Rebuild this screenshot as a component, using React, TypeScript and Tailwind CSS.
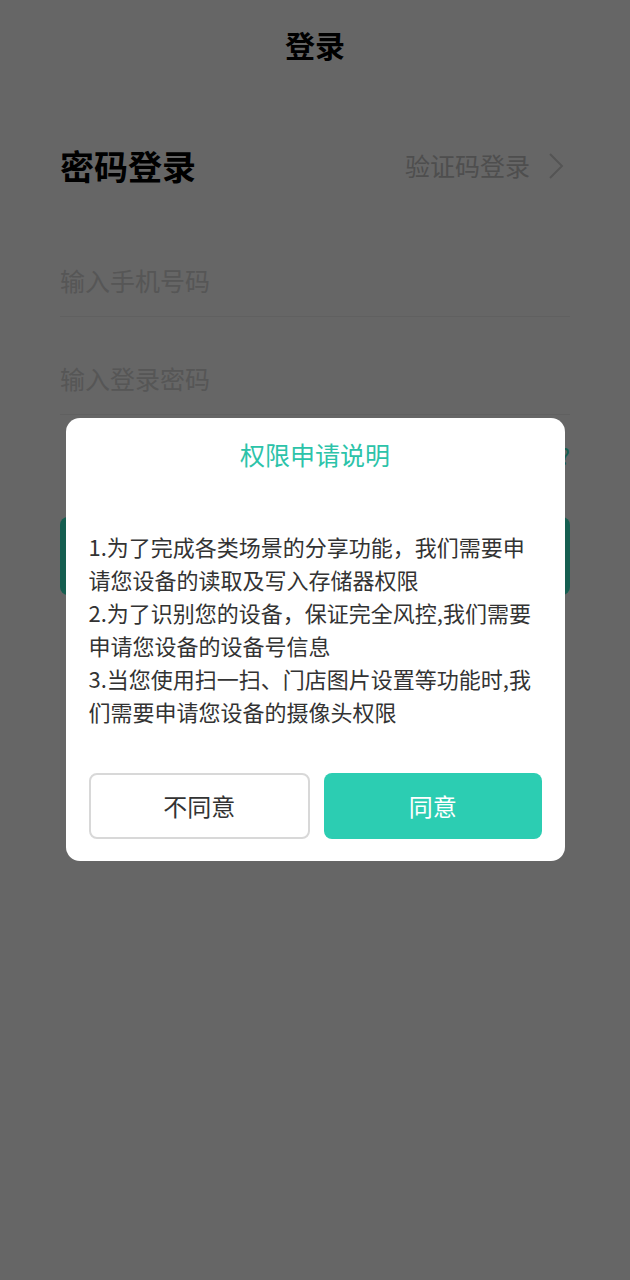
import React from 'react'

const lines = [
  '1.为了完成各类场景的分享功能，我们需要申',
  '请您设备的读取及写入存储器权限',
  '2.为了识别您的设备，保证完全风控,我们需要',
  '申请您设备的设备号信息',
  '3.当您使用扫一扫、门店图片设置等功能时,我',
  '们需要申请您设备的摄像头权限',
]

function Field({ placeholder }: { placeholder: string }) {
  return (
    <div className="flex h-[98px] items-end border-b border-[#f0f0f0] pb-[23px]">
      <span className="text-[25px] leading-[25px] text-[#d6d6d6]">{placeholder}</span>
    </div>
  )
}

function PermissionDialog() {
  return (
    <div className="fixed inset-0 bg-black/60 pt-[418px]">
      <div className="mx-auto w-[499px] rounded-[14px] bg-white pt-[20px] pb-[22px]">
        <h2 className="text-center text-[25px] leading-[32px] text-[#2cc3a9]">权限申请说明</h2>

        <div className="mt-[60px] px-[23px] text-[22px] text-[#333]">
          {lines.map((line) => (
            <div key={line} className="h-[33px] whitespace-nowrap leading-[33px]">
              {line}
            </div>
          ))}
        </div>

        <div className="mt-[45px] flex gap-[14px] px-[23px]">
          <button className="h-[66px] flex-1 rounded-[8px] border-2 border-[#d8d8d8] bg-white text-[24px] text-[#333]">
            不同意
          </button>
          <button className="h-[66px] flex-1 rounded-[8px] bg-[#2ccdb2] text-[24px] text-white">
            同意
          </button>
        </div>
      </div>
    </div>
  )
}

export default function App() {
  return (
    <main
      className="relative min-h-[1280px] bg-white text-black"
      style={{ fontFamily: '"Noto Sans CJK SC", "Noto Sans", sans-serif' }}
    >
      <header className="flex h-[88px] items-center justify-center">
        <h1 className="text-[30px] font-bold">登录</h1>
      </header>

      <section className="px-[60px]">
        <div className="mt-[53px] flex h-[50px] items-center justify-between">
          <div className="text-[34px] font-bold leading-[50px]">密码登录</div>
          <div className="flex items-center text-[25px] text-[#c3c3c3]">
            <span>验证码登录</span>
            <svg
              className="mr-[6px] ml-[18px]"
              width="16"
              height="28"
              viewBox="0 0 16 28"
              fill="none"
              stroke="#d2d2d2"
              strokeWidth="2"
            >
              <path d="M2 2l12 12L2 26" />
            </svg>
          </div>
        </div>

        <div className="mt-[28px]">
          <Field placeholder="输入手机号码" />
          <Field placeholder="输入登录密码" />
        </div>

        <div className="mt-[25px] flex justify-end">
          <span className="text-[22px] leading-[30px] text-[#35ecc8]">忘记密码?</span>
        </div>

        {/* login button sits under the dialog, label not visible */}
        <button
          aria-label="登录"
          className="mt-[47px] block h-[78px] w-full rounded-[8px] bg-[#35ecc8]"
        />
      </section>

      <PermissionDialog />
    </main>
  )
}
